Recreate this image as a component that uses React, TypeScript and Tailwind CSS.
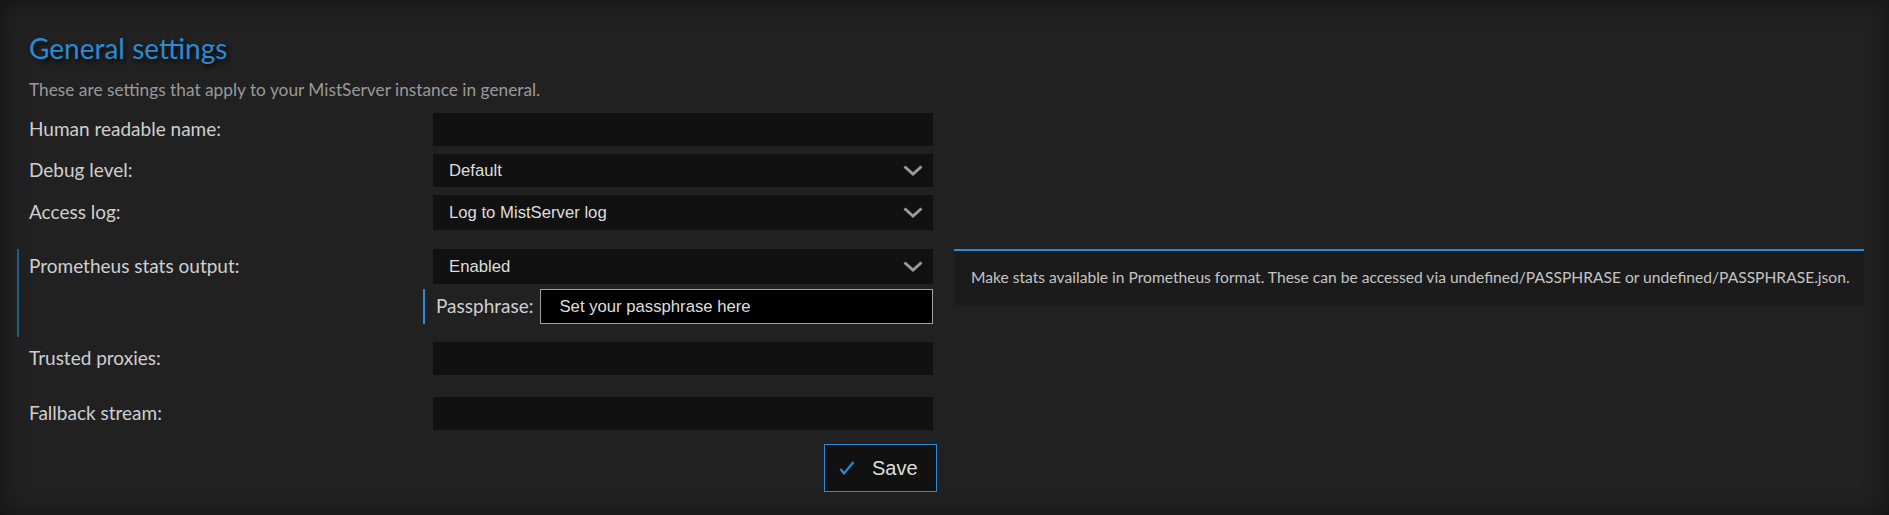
import React from 'react'

const LABEL = "font-['Lato','Noto_Sans',sans-serif] text-[19px] text-[#cfcfcf]"
const FIELD = "font-['Liberation_Sans',Arial,sans-serif] text-[16.7px] text-[#dedede]"

function Chevron() {
  return (
    <svg width="20" height="11" viewBox="0 0 20 11" className="shrink-0">
      <polyline points="1.5,1.5 10,9 18.5,1.5" fill="none" stroke="#9a9a9a" strokeWidth="3" strokeLinejoin="miter" />
    </svg>
  )
}

function Select({ value, h = 'h-[34px]' }: { value: string; h?: string }) {
  return (
    <div className={`w-[500px] ${h} bg-[#111111] flex items-center justify-between pl-4 pr-[10px] ${FIELD}`}>
      <span>{value}</span>
      <Chevron />
    </div>
  )
}

function Input({ h = 'h-[33px]' }: { h?: string }) {
  return <div className={`w-[500px] ${h} bg-[#111111]`} />
}

function Row({ label, children, className = '' }: { label: string; children: React.ReactNode; className?: string }) {
  return (
    <div className={`flex items-center pl-3 ${className}`}>
      <div className={`w-[404px] ${LABEL}`}>{label}</div>
      {children}
    </div>
  )
}

export default function App() {
  return (
    <div className="min-h-screen w-full bg-[#212121] shadow-[inset_0_0_24px_rgba(0,0,0,0.45)] pl-[17px] pt-8">
      {/* Header */}
      <h1 className="pl-3 font-['Lato','Noto_Sans',sans-serif] text-[28px] leading-[32px] text-[#2a8ad6] [text-shadow:2px_3px_4px_rgba(0,0,0,0.8)]">
        General settings
      </h1>
      <p className="pl-3 mt-4 font-['Lato','Noto_Sans',sans-serif] text-[17.3px] leading-[20px] text-[#9a9a9a]">
        These are settings that apply to your MistServer instance in general.
      </p>

      <div className="w-[916px] mt-[13px]">
        <Row label="Human readable name:">
          <Input />
        </Row>
        <Row label="Debug level:" className="mt-2">
          <Select value="Default" h="h-[33px]" />
        </Row>
        <Row label="Access log:" className="mt-2">
          <Select value="Log to MistServer log" h="h-[35px]" />
        </Row>
      </div>

      {/* Prometheus block with help */}
      <div className="flex items-start mt-[19px]">
        <div className="w-[916px] border-l-2 border-[#1d5f90] pl-[10px] pb-[13px]">
          <div className="flex items-center">
            <div className={`w-[404px] ${LABEL}`}>Prometheus stats output:</div>
            <Select value="Enabled" h="h-[35px]" />
          </div>
          <div className="flex items-center mt-[5px] ml-[394px] h-[35px] border-l-2 border-[#2a8ad6] pl-[11px]">
            <span className={LABEL}>Passphrase:</span>
            <div className={`ml-[7px] w-[396px] h-[35px] bg-black border border-[#a0a0a0] flex items-center pl-[18px] ${FIELD} text-[#d0d0d0]`}>
              Set your passphrase here
            </div>
          </div>
        </div>
        <div className="ml-[21px] w-[910px] h-[56px] bg-[#1b1b1b] border-t-2 border-[#2a8ad6] flex items-center pl-[17px] font-['Lato','Noto_Sans',sans-serif] text-[15.6px] text-[#c4c4c4]">
          Make stats available in Prometheus format. These can be accessed via undefined/PASSPHRASE or undefined/PASSPHRASE.json.
        </div>
      </div>

      <div className="w-[916px] mt-[5px]">
        <Row label="Trusted proxies:">
          <Input />
        </Row>
        <Row label="Fallback stream:" className="mt-[22px]">
          <Input />
        </Row>
        <div className="flex justify-end mt-[14px] -mr-1">
          <button className="w-[113px] h-[48px] bg-[#111111] border border-[#2a8ad6] flex items-center pl-[14px] gap-[17px]">
            <svg width="16" height="14" viewBox="0 0 16 14">
              <path d="M1.5 8 L5 12.5 L14.5 1" fill="none" stroke="#2a8ad6" strokeWidth="2.2" />
            </svg>
            <span className={`${FIELD} text-[20px] text-[#cfcfcf]`}>Save</span>
          </button>
        </div>
      </div>
    </div>
  )
}
